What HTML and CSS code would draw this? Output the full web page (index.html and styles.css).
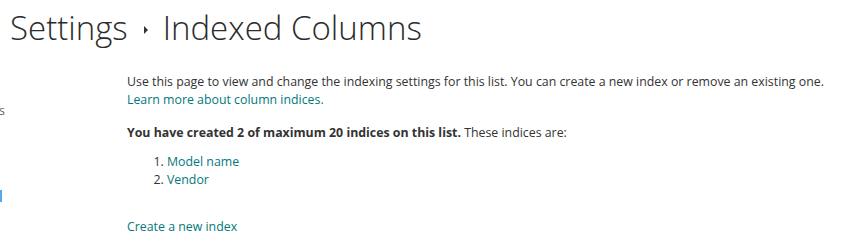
FILE: index.html
```html
<!DOCTYPE html>
<html lang="en">
<head>
    <meta charset="UTF-8" />
    <title>Settings - Indexed Columns</title>
    <link rel="stylesheet" href="styles.css">
</head>
<body>
    <div class="page">
        <h1 class="page-title">
            <span>Settings</span>
            <span class="crumb-arrow"></span>
            <span>Indexed Columns</span>
        </h1>
        <div class="layout">
            <div class="side-nav">
                <span class="nav-cut">s</span>
                <span class="nav-mark"></span>
            </div>
            <div class="main">
                <p class="intro">Use this page to view and change the indexing settings for this list. You can create a new index or remove an existing one.<br>
                    <a href="#">Learn more about column indices.</a></p>
                <p class="count"><strong>You have created 2 of maximum 20 indices on this list.</strong> These indices are:</p>
                <ol class="index-list">
                    <li><a href="#">Model name</a></li>
                    <li><a href="#">Vendor</a></li>
                </ol>
                <p class="create"><a href="#">Create a new index</a></p>
            </div>
        </div>
    </div>
</body>
</html>
```

FILE: styles.css
```css
body {
    margin: 0;
    font-family: 'Open Sans', sans-serif;
    font-size: 12.35px;
    color: #333;
    background: #fff;
}
a {
    color: #03787c;
    text-decoration: none;
}
.page-title {
    margin: 0;
    padding: 5px 0 0 10px;
    font-weight: 300;
    font-size: 33px;
    line-height: 46px;
    color: #2b2b2b;
    display: flex;
    align-items: center;
}
.crumb-arrow {
    width: 0;
    height: 0;
    border-top: 4px solid transparent;
    border-bottom: 4px solid transparent;
    border-left: 4px solid #333;
    margin: 3px 15px 0 16px;
}
.layout {
    display: flex;
}
.side-nav {
    width: 127px;
    position: relative;
}
.nav-cut {
    position: absolute;
    left: -1px;
    top: 51px;
    color: #666;
}
.nav-mark {
    position: absolute;
    left: 0;
    top: 139px;
    width: 2px;
    height: 12px;
    background: #5aa7e6;
}
.main {
    padding-top: 22px;
}
.main p {
    margin: 0;
    line-height: 18px;
}
.count {
    padding-top: 15px;
}
.count strong {
    font-weight: 700;
}
.index-list {
    margin: 0;
    padding: 11px 0 0 40px;
    line-height: 18px;
}
.create {
    padding-top: 29px;
}
```
